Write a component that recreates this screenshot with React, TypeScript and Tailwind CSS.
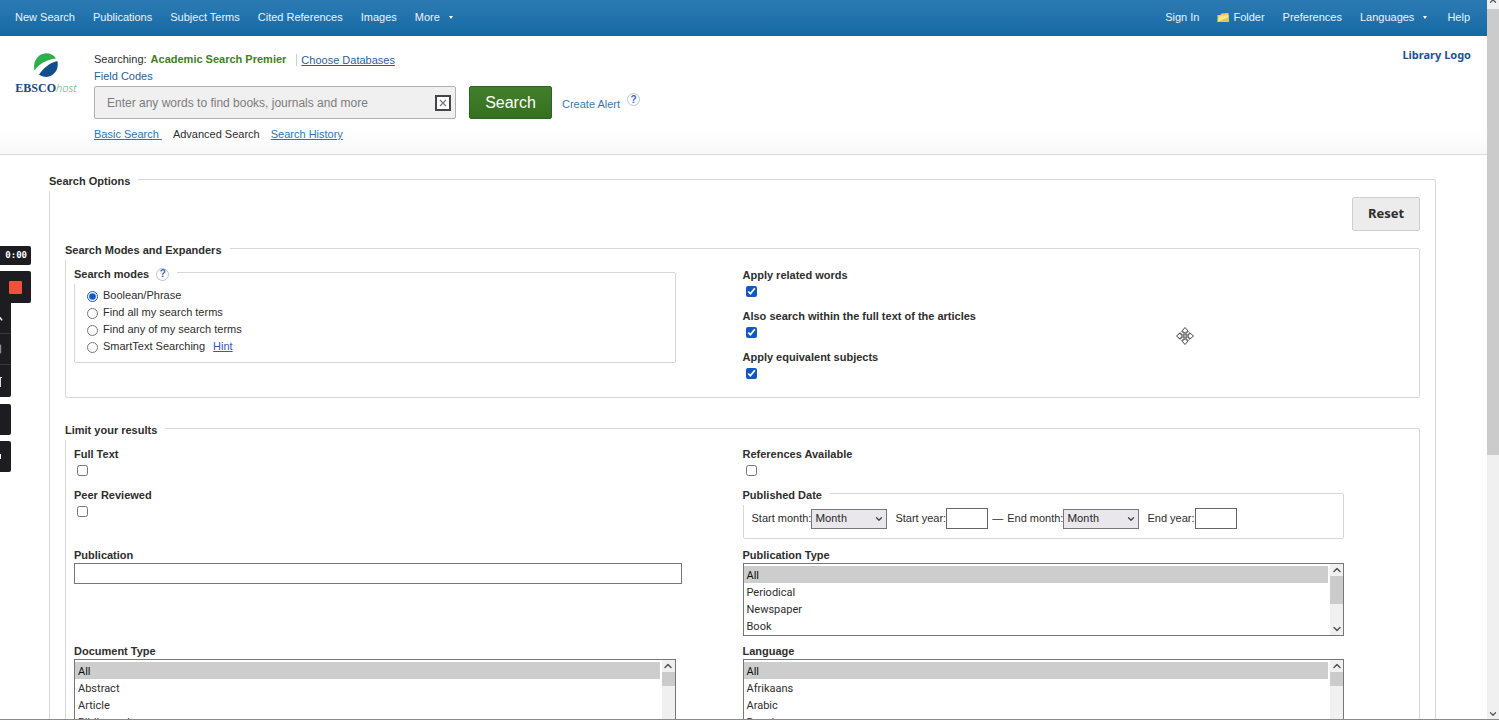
import { useState, type ReactNode } from 'react';
import { ChevronDown, ChevronUp } from 'lucide-react';

const searchModes = ['Boolean/Phrase', 'Find all my search terms', 'Find any of my search terms', 'SmartText Searching'];

const publicationTypes = ['All', 'Periodical', 'Newspaper', 'Book', 'Review', 'Trade Publication', 'Conference Paper'];

const documentTypes = ['All', 'Abstract', 'Article', 'Bibliography', 'Biography', 'Book Chapter', 'Case Study'];

const languages = ['All', 'Afrikaans', 'Arabic', 'Bosnian', 'Bulgarian', 'Catalan', 'Chinese'];

const months = [
  'January', 'February', 'March', 'April', 'May', 'June',
  'July', 'August', 'September', 'October', 'November', 'December',
];

function HelpIcon({ label }: { label: string }) {
  return (
    <button
      type="button"
      aria-label={label}
      className="flex size-[13px] shrink-0 items-center justify-center rounded-full border border-[#b9c4d6] bg-white text-[10px] leading-none font-bold text-[#3a68b8]"
    >
      ?
    </button>
  );
}

function Logo() {
  return (
    <a href="#" aria-label="EBSCOhost" className="flex w-16 shrink-0 flex-col items-center pt-[17px]">
      <svg viewBox="0 0 24 24" className="size-6">
        <path d="M0.6 17.5C-1.6 9 3.5 0.6 12 0.2c4.5 0 8 2 10 5.3C12 6.8 5 11 0.6 17.5Z" fill="#2bb04c" />
        <path d="M23.3 8C25.5 16 20 23.7 12.5 24 9.5 24 7 23 5 21.6 9.5 15 15 10.2 23.3 8Z" fill="#114e8c" />
      </svg>
      <span className="mt-[3px] flex items-baseline font-['Liberation_Serif',serif] text-[12px] leading-4 font-bold text-[#1a4782]">
        EBSCO
        <span className="font-['Open_Sans',sans-serif] text-[11px] font-light text-[#3fae5a] italic">host</span>
      </span>
    </a>
  );
}

function TopBar() {
  return (
    <nav className="flex h-9 shrink-0 items-center justify-between bg-linear-to-b from-[#2c7ab4] to-[#146aa4] pr-[17px] pb-[2px] pl-[15px] text-[11px] text-[#eaf3fa]">
      <div className="flex items-center gap-[18px]">
        <a href="#">New Search</a>
        <a href="#">Publications</a>
        <a href="#">Subject Terms</a>
        <a href="#">Cited References</a>
        <a href="#">Images</a>
        <button type="button" className="flex items-center gap-[9px]">
          More
          <span className="border-x-[2px] border-t-[3px] border-x-transparent border-t-white" />
        </button>
      </div>
      <div className="flex items-center gap-[18px]">
        <a href="#">Sign In</a>
        <a href="#" className="flex items-center gap-1">
          <svg viewBox="0 0 12 11" className="h-[11px] w-3">
            <path d="M0.5 3h3l1-1.5 7-0.5v9h-11z" fill="#f3cf4f" />
            <path d="M0.5 10 2.5 4.5 11.5 3v7z" fill="#fbe88c" />
            <path d="M0.5 10 11.5 5v5z" fill="#efc53c" />
          </svg>
          Folder
        </a>
        <a href="#">Preferences</a>
        <button type="button" className="mr-[2px] flex items-center gap-[9px]">
          Languages
          <span className="border-x-[2px] border-t-[3px] border-x-transparent border-t-white" />
        </button>
        <a href="#">Help</a>
      </div>
    </nav>
  );
}

function SearchHeader() {
  const [query, setQuery] = useState('');

  return (
    <header className="flex shrink-0 border-b border-[#dcdcdc] bg-linear-to-b from-white from-80% to-[#f8f8f8] pr-4 pb-3 pl-[14px]">
      <Logo />
      <div className="ml-4 flex flex-col items-start pt-[15px]">
        <div className="flex items-center leading-[17px]">
          <span>Searching:</span>
          <span className="ml-1 font-bold text-[#42801d]">Academic Search Premier</span>
          <a href="#" className="ml-[10px] border-l border-[#d0d0d0] pl-1 leading-3 text-[#2a5f9e] underline">Choose Databases</a>
        </div>
        <a href="#" className="leading-[17px] text-[#2a5f9e]">Field Codes</a>
        <form className="mt-px flex items-center" onSubmit={(e) => e.preventDefault()}>
          <div className="flex h-[33px] w-[362px] items-center rounded-xs border border-[#b0b0b0] bg-[#f0f0f0] pr-1 pl-3">
            <input
              type="text"
              aria-label="Search terms"
              value={query}
              onChange={(e) => setQuery(e.target.value)}
              placeholder="Enter any words to find books, journals and more"
              className="min-w-0 flex-1 bg-transparent text-[12px] outline-none placeholder:text-[#7c7c7c]"
            />
            <button
              type="button"
              aria-label="Clear search"
              onClick={() => setQuery('')}
              className="flex size-4 items-center justify-center border-2 border-[#44464a] bg-white"
            >
              <svg viewBox="0 0 8 8" className="size-2" stroke="#777" strokeWidth="1.2">
                <path d="M1 1l6 6M7 1l-6 6" />
              </svg>
            </button>
          </div>
          <button type="submit" className="ml-[13px] h-[33px] w-[83px] rounded-xs border border-[#2d6420] bg-linear-to-b from-[#427f2c] to-[#35701f] text-[16px] text-white">
            Search
          </button>
          <a href="#" className="mt-[3px] mr-[7px] ml-[10px] text-[#3a76b4]">Create Alert</a>
          <div className="pb-[6px]">
            <HelpIcon label="Create Alert help" />
          </div>
        </form>
        <div className="mt-[7px] flex gap-[11px] leading-4">
          <a href="#" className="whitespace-pre text-[#2f75b5] underline">{'Basic Search '}</a>
          <span>Advanced Search</span>
          <a href="#" className="text-[#2f75b5] underline">Search History</a>
        </div>
      </div>
      <a href="#" className="mt-[11px] ml-auto self-start font-['Noto_Sans',sans-serif] leading-4 font-bold text-[#1b5496]">Library Logo</a>
    </header>
  );
}

function Group({ title, help, className, children }: { title: string; help?: ReactNode; className?: string; children: ReactNode }) {
  return (
    <fieldset className={`min-w-0 rounded-xs border border-[#d6d6d6] ${className ?? ''}`}>
      <legend className="-ml-px bg-white pt-1 pr-2 leading-5 font-bold">
        <span className="flex items-center gap-[7px]">
          {title}
          {help}
        </span>
      </legend>
      {children}
    </fieldset>
  );
}

function CheckOption({ label, defaultChecked }: { label: string; defaultChecked?: boolean }) {
  return (
    <label className="flex h-[41px] flex-col items-start font-bold leading-4">
      {label}
      <input type="checkbox" defaultChecked={defaultChecked} className="mt-[3px] ml-[3px] size-[11px] accent-[#1058c8]" />
    </label>
  );
}

function ListBox({ label, options, thumb }: { label: string; options: string[]; thumb: string }) {
  return (
    <label className="block h-24 font-bold leading-4">
      {label}
      <span className="flex h-[73px] w-[90%] border border-[#777] bg-white">
        <select
          multiple
          size={4}
          defaultValue={['All']}
          className="h-full min-w-0 flex-1 overflow-y-auto bg-white pt-[2px] pr-[2px] font-[Roboto,sans-serif] text-[11px] font-normal outline-none [scrollbar-width:none]"
        >
          {options.map((option) => (
            <option key={option} className="h-[17px] min-h-0 px-[3px] pt-[3px] pb-0 leading-4 checked:bg-[#cdcdcd]">{option}</option>
          ))}
        </select>
        <span aria-hidden="true" className="flex w-[13px] flex-col items-center bg-[#f0f0f0]">
          <ChevronUp size={12} strokeWidth={3} color="#555" />
          <span className={`w-full bg-[#cbcbcb] ${thumb}`} />
          <ChevronDown size={12} strokeWidth={3} color="#555" className="mt-auto" />
        </span>
      </span>
    </label>
  );
}

function MonthSelect({ label }: { label: string }) {
  return (
    <label className="flex items-center">
      {label}
      <span className="grid items-center">
        <select
          defaultValue="Month"
          className="col-start-1 row-start-1 h-5 w-[76px] appearance-none border border-[#777] bg-[#e9e7ec] pl-[3px] font-[Roboto,sans-serif] text-[11px] leading-4"
        >
          <option>Month</option>
          {months.map((month) => (
            <option key={month}>{month}</option>
          ))}
        </select>
        <ChevronDown size={10} strokeWidth={3} color="#444" className="pointer-events-none col-start-1 row-start-1 mr-[3px] justify-self-end" />
      </span>
    </label>
  );
}

function YearInput({ label }: { label: string }) {
  return (
    <label className="flex items-center">
      {label}
      <input type="text" className="h-[21px] w-[42px] border border-[#666] bg-white px-1" />
    </label>
  );
}

function SearchOptions() {
  return (
    <main className="pt-3 pr-[51px] pl-[49px]">
      <Group title="Search Options">
        <div className="px-[15px]">
          <div className="flex justify-end pt-[6px] pb-[5px]">
            <button type="reset" className="h-[34px] w-[68px] rounded-xs border border-[#cfcfcf] bg-[#ececec] font-['Noto_Sans',sans-serif] text-[13px] font-bold">
              Reset
            </button>
          </div>

          <Group title="Search Modes and Expanders">
            <div className="grid grid-cols-2 px-2 pb-[7px]">
              <div>
                <Group title="Search modes" className="w-[90%]" help={<HelpIcon label="Search modes help" />}>
                  <div className="flex flex-col px-3 pt-[3px] pb-[7px]">
                    {searchModes.map((mode) => (
                      <div key={mode} className="flex h-[17px] items-center gap-2">
                        <label className="flex items-center gap-[5px]">
                          <input type="radio" name="mode" defaultChecked={mode === 'Boolean/Phrase'} className="mt-px size-[11px] accent-[#1058c8]" />
                          {mode}
                        </label>
                        {mode === 'SmartText Searching' && <a href="#" className="text-[#3a55c4] underline">Hint</a>}
                      </div>
                    ))}
                  </div>
                </Group>
              </div>
              <div className="pt-[7px]">
                <CheckOption label="Apply related words" defaultChecked />
                <CheckOption label="Also search within the full text of the articles" defaultChecked />
                <CheckOption label="Apply equivalent subjects" defaultChecked />
              </div>
            </div>
          </Group>

          <Group title="Limit your results" className="mt-[18px]">
            <div className="grid grid-cols-2 px-2 pt-[6px] pb-4">
              <CheckOption label="Full Text" />
              <CheckOption label="References Available" />

              <CheckOption label="Peer Reviewed" />
              <div className="-mt-[6px] h-[66px]">
                <Group title="Published Date" className="w-[90%]">
                  <div className="flex items-center gap-2 px-2 pt-[3px] pb-[9px]">
                    <MonthSelect label="Start month:" />
                    <YearInput label="Start year:" />
                    <div className="-ml-1 flex items-center gap-1">
                      <span>—</span>
                      <MonthSelect label="End month:" />
                    </div>
                    <YearInput label="End year:" />
                  </div>
                </Group>
              </div>

              <label className="block font-bold leading-4">
                Publication
                <input type="text" className="block h-[21px] w-[91%] border border-[#777] bg-white px-1 font-normal" />
              </label>
              <ListBox label="Publication Type" options={publicationTypes} thumb="h-7" />

              <ListBox label="Document Type" options={documentTypes} thumb="h-[14px]" />
              <ListBox label="Language" options={languages} thumb="h-[14px]" />
            </div>
          </Group>
        </div>
      </Group>
    </main>
  );
}

// screen recorder controls docked to the left edge, mostly off screen
function RecorderWidget() {
  return (
    <aside className="absolute top-[246px] left-0 flex flex-col items-start text-white">
      <div className="flex h-[19px] w-[31px] items-center justify-end rounded-r-xs bg-[#1d1c20] pr-1 font-['DejaVu_Sans_Mono',monospace] text-[9px] font-bold">
        0:00
      </div>
      <div className="mt-[6px] flex h-8 w-[31px] items-center justify-end rounded-r-xs bg-[#1d1c20] pr-[9px]">
        <button type="button" aria-label="Stop recording" className="size-[13px] rounded-[1px] bg-[#f0503c]" />
      </div>
      <div className="flex w-[11px] flex-col divide-y divide-[#3a393e] rounded-br-xs bg-[#1d1c20]">
        <svg viewBox="0 0 11 31" className="h-[31px]" fill="none" stroke="#fff" strokeWidth="1.5">
          <path d="M-1 14l3 4" />
        </svg>
        <svg viewBox="0 0 11 31" className="h-[31px]" stroke="#aaa">
          <path d="M0.5 11v9" />
        </svg>
        <svg viewBox="0 0 11 32" className="h-8" stroke="#ddd" fill="none">
          <path d="M-1 12.5h3M0.5 13v9" />
        </svg>
      </div>
      <div className="mt-[7px] h-[31px] w-[11px] rounded-r-xs bg-[#1d1c20]" />
      <div className="mt-[6px] h-[31px] w-[11px] rounded-r-xs bg-[#1d1c20]">
        <svg viewBox="0 0 11 31" className="h-[31px]" fill="#fff">
          <path d="M0 13h1v5h-1z" />
        </svg>
      </div>
    </aside>
  );
}

function MoveCursor() {
  return (
    <svg viewBox="0 0 18 18" className="pointer-events-none absolute top-[327px] left-[1176px] size-[18px]" fill="#fff" stroke="#33333f" strokeWidth="0.9">
      <path d="M9 0.5 12 4v1h-2v3h3V6h1l3.5 3L14 12h-1v-2h-3v3h2v1l-3 3.5L6 14v-1h2v-3H5v2H4L0.5 9 4 6h1v2h3V5H6V4z" />
      <path d="M9 5v8M5 9h8" strokeWidth="0.5" />
    </svg>
  );
}

export default function App() {
  return (
    <div className="relative flex h-screen overflow-hidden border-b border-[#8a8a8a] bg-white font-['Liberation_Sans',Arial,sans-serif] text-[11px] text-[#2e2e2e]">
      <div className="flex min-w-0 flex-1 flex-col overflow-hidden">
        <TopBar />
        <SearchHeader />
        <SearchOptions />
      </div>
      <div aria-hidden="true" className="flex w-3 shrink-0 flex-col items-center bg-[#f0f0f0]">
        <ChevronUp size={10} strokeWidth={3} color="#555" className="-mt-1 mb-[3px] shrink-0" />
        <div className="h-[62%] w-full bg-[#cbcbcb]" />
        <ChevronDown size={10} strokeWidth={3} color="#555" className="mt-auto shrink-0" />
      </div>
      <RecorderWidget />
      <MoveCursor />
    </div>
  );
}
